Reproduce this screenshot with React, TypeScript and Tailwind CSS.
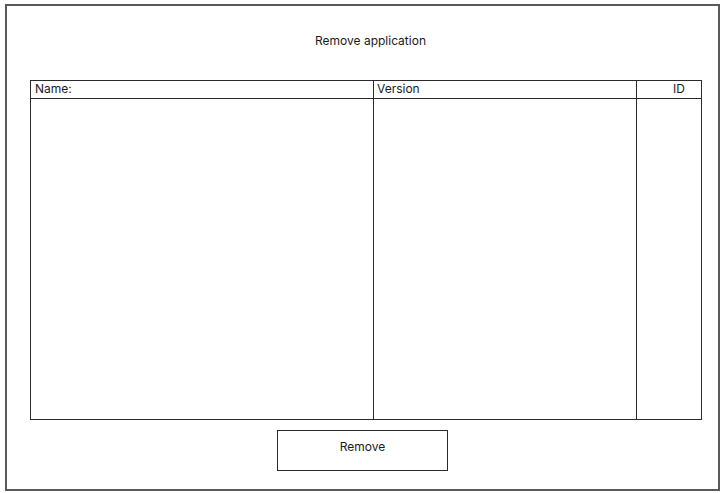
export default function App() {
  return (
    <div className="w-[722px] h-[493px] bg-white pt-[4px] pl-[5px] font-['Inter',sans-serif] text-[#1a1a1a]">
      <div className="w-[715px] h-[487px] border-2 border-[#5a5a5a] flex flex-col items-start">
        <div className="w-full text-center text-[12px] leading-[16px] mt-[27px] pl-[16px]">Remove application</div>
        <div className="ml-[23px] mt-[31px] w-[672px] h-[340px] border border-[#2a2a2a] flex flex-col text-[12px] leading-[16px]">
          <div className="flex h-[18px] border-b border-[#2a2a2a]">
            <div className="w-[343px] border-r border-[#2a2a2a] pl-[4px]">Name:</div>
            <div className="w-[263px] border-r border-[#2a2a2a] pl-[3px]">Version</div>
            <div className="flex-1 pl-[36px]">ID</div>
          </div>
          <div className="flex flex-1">
            <div className="w-[343px] border-r border-[#2a2a2a]"></div>
            <div className="w-[263px] border-r border-[#2a2a2a]"></div>
            <div className="flex-1"></div>
          </div>
        </div>
        <div className="ml-[270px] mt-[10px] w-[171px] h-[41px] border border-[#2a2a2a] text-center text-[12px] leading-[16px] pt-[8px]">Remove</div>
      </div>
    </div>
  );
}
